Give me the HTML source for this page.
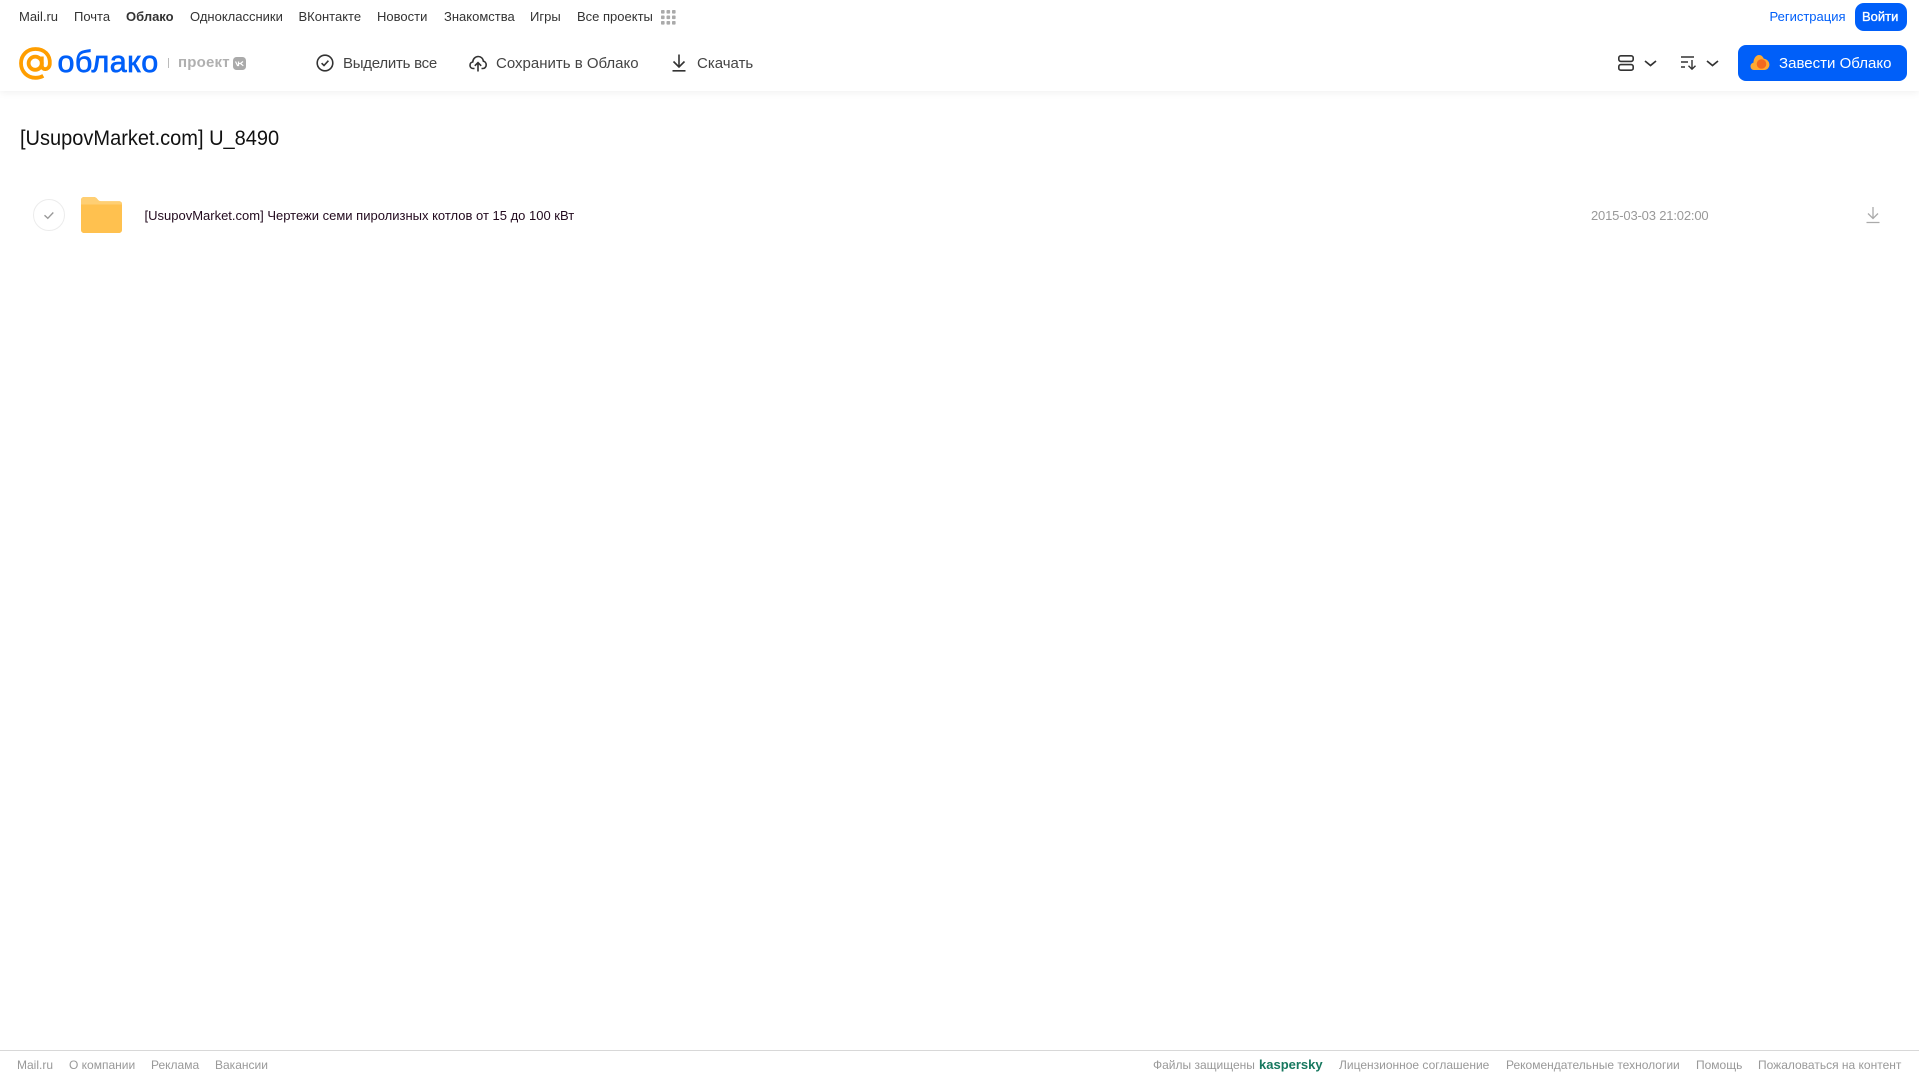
<!DOCTYPE html>
<html lang="ru">
<head>
<meta charset="utf-8">
<title>Облако</title>
<style>
html,body{margin:0;padding:0;width:1919px;height:1079px;overflow:hidden;background:#fff;font-family:"Liberation Sans",Arial,sans-serif}
.t{position:absolute;white-space:nowrap;line-height:20px}
.n{top:7px;font-size:13px;color:#333}
.a{top:54px;font-size:15px;color:#444}
.f{top:1055px;font-size:12px;color:#999}
svg{position:absolute;overflow:visible}
#hs{position:absolute;left:0;top:0;width:1919px;height:91px;background:#fff;box-shadow:0 1px 8px rgba(0,0,0,.07)}
</style>
</head>
<body>
<div id="hs"></div>

<span class="t n" style="left:19px">Mail.ru</span>
<span class="t n" style="left:74px">Почта</span>
<span class="t n" style="left:126px;font-weight:bold;color:#333">Облако</span>
<span class="t n" style="left:190px">Одноклассники</span>
<span class="t n" style="left:298.500px">ВКонтакте</span>
<span class="t n" style="left:377px">Новости</span>
<span class="t n" style="left:444px">Знакомства</span>
<span class="t n" style="left:530px">Игры</span>
<span class="t n" style="left:577px">Все проекты</span>
<svg style="left:661px;top:10px" width="15" height="15" fill="#aaa">
<rect x="0" y="0" width="3.6" height="3.6" rx=".8"/><rect x="5.5" y="0" width="3.6" height="3.6" rx=".8"/><rect x="11" y="0" width="3.6" height="3.6" rx=".8"/>
<rect x="0" y="5.5" width="3.6" height="3.6" rx=".8"/><rect x="5.5" y="5.5" width="3.6" height="3.6" rx=".8"/><rect x="11" y="5.5" width="3.6" height="3.6" rx=".8"/>
<rect x="0" y="11" width="3.6" height="3.6" rx=".8"/><rect x="5.5" y="11" width="3.6" height="3.6" rx=".8"/><rect x="11" y="11" width="3.6" height="3.6" rx=".8"/>
</svg>

<span class="t n" style="left:1769.500px;color:#005ff9">Регистрация</span>
<div style="position:absolute;left:1855px;top:3px;width:52px;height:28px;border-radius:9px;background:#005ff9"></div>
<span class="t n" style="left:1862px;color:#fff;font-size:13px;-webkit-text-stroke:.35px #fff">Войти</span>

<!-- logo -->
<svg style="left:19px;top:47px" width="33" height="33" viewBox="0 0 33 33" fill="none" stroke="#ff9e00" stroke-width="3.8">
<circle cx="16.2" cy="16.2" r="6.6"/>
<path d="M22.800 9.500v9c0 5 7.400 5 8-1.400C31.600 7.700 25 2 16.500 2 8 2 2 8.300 2 16.300c0 8.500 6.500 14.500 14.500 14.500 3 0 5.500-.7 7.800-2"/>
</svg>
<span class="t" style="left:57.500px;top:45px;line-height:34px;font-size:30.500px;color:#005ff9;-webkit-text-stroke:.7px #005ff9;letter-spacing:.45px">облако</span>
<div style="position:absolute;left:168px;top:58px;width:1px;height:10px;background:#bbb"></div>
<span class="t" style="left:178px;top:53px;font-size:15px;color:#b0b0b0;font-weight:bold;letter-spacing:.2px">проект</span>
<div style="position:absolute;left:232.500px;top:57px;width:13px;height:13px;border-radius:3.500px;background:#aaa"></div>
<svg style="left:232.500px;top:57px" width="13" height="13" viewBox="0 0 13 13" fill="none" stroke="#fff" stroke-width="1.200"><path d="M2.500 4.500 4.500 8.500 5.500 8.500V4.500M10 4.500 7.500 6.500 10.300 8.800M5.500 6.500H7.500"/></svg>

<!-- actions -->
<svg style="left:316px;top:54px" width="18" height="18" viewBox="0 0 18 18" fill="none" stroke="#333" stroke-width="1.600"><circle cx="9" cy="9" r="7.800"/><path d="M5.600 9.200 8 11.500 12.400 6.700"/></svg>
<span class="t a" style="left:343px;letter-spacing:-.25px">Выделить все</span>
<svg style="left:469px;top:55px" width="18" height="17" viewBox="0 0 18 17" fill="none" stroke="#333" stroke-width="1.600"><path d="M5.500 13.500H4.300C2.300 13.500 1 12 1 10.200 1 8.500 2.200 7.300 3.700 7 4 3.800 6.300 1.500 9.200 1.500c2.700 0 4.900 2 5.200 4.700 1.600.3 2.800 1.900 2.800 3.700 0 2-1.400 3.600-3.300 3.600H12.500"/><path d="M9 16.500V7.700M5.800 10.800 9 7.600l3.200 3.200"/></svg>
<span class="t a" style="left:496px">Сохранить в Облако</span>
<svg style="left:672px;top:54px" width="14" height="18" viewBox="0 0 14 18" fill="none" stroke="#333" stroke-width="1.600"><path d="M7 .5V12.500M1.500 7.500 7 13l5.500-5.500M.5 16.800H13.500"/></svg>
<span class="t a" style="left:697px">Скачать</span>

<!-- right controls -->
<svg style="left:1618px;top:55px" width="16" height="16" viewBox="0 0 16 16" fill="none" stroke="#333" stroke-width="1.600"><rect x=".8" y=".8" width="14.400" height="5.600" rx="2"/><rect x=".8" y="9.600" width="14.400" height="5.600" rx="2"/></svg>
<svg style="left:1644px;top:60px" width="13" height="7" viewBox="0 0 13 7" fill="none" stroke="#333" stroke-width="1.700"><path d="M1 1 6.500 5.500 12 1"/></svg>
<svg style="left:1681px;top:56px" width="16" height="14" viewBox="0 0 16 14" fill="none" stroke="#333" stroke-width="1.400"><path d="M0 1H13M0 6H7M0 11H4M11 4V13M7.500 9.800 11 13.200l3.500-3.400"/></svg>
<svg style="left:1706px;top:60px" width="13" height="7" viewBox="0 0 13 7" fill="none" stroke="#333" stroke-width="1.700"><path d="M1 1 6.500 5.500 12 1"/></svg>
<div style="position:absolute;left:1738px;top:45px;width:169px;height:36px;border-radius:8px;background:#005ff9"></div>
<svg style="left:1750px;top:54px" width="20" height="17" viewBox="0 0 20 17"><path d="M4 16C1.500 16 .5 14 .5 12.300.5 10.500 1.800 9 3.400 8.800 3.600 4.500 6 1 9 1c2.500 0 4 1.800 4.800 3.800 3 .2 5.600 2.800 5.600 5.800 0 3-2.300 5.400-5.200 5.400z" fill="#ffa930"/><circle cx="11.500" cy="10" r="4.800" fill="#f2691f"/></svg>
<span class="t" style="left:1779px;top:54px;font-size:15px;color:#fff;letter-spacing:.02px">Завести Облако</span>

<!-- content -->
<span class="t" style="left:19.500px;top:126px;line-height:26px;font-size:21px;color:#111;transform:scaleX(.953);transform-origin:0 50%">[UsupovMarket.com] U_8490</span>

<svg style="left:33px;top:199px" width="32" height="32" viewBox="0 0 32 32" fill="none"><circle cx="16" cy="16" r="15.500" stroke="#ececec"/><path d="M11.500 16.200 14.800 19.300 20.300 13.500" stroke="#999" stroke-width="1.400"/></svg>
<svg style="left:81px;top:197px" width="41" height="36" viewBox="0 0 41 36"><path d="M0 3C0 1.300 1.300 0 3 0h9.500c2 0 2.800.8 4 2.200 1 1.200 1.800 2 3.500 2h18c1.700 0 3 1.300 3 3V33c0 1.700-1.300 3-3 3H3c-1.700 0-3-1.300-3-3z" fill="#ffc14f"/><path d="M0 7.500h41V6.500c0-1.300-1.300-2.300-3-2.300H20c-1.700 0-2.500-.8-3.500-2C15.300.8 14.500 0 12.500 0H3C1.300 0 0 1.300 0 3z" fill="#ffcf73"/></svg>
<span class="t" style="left:144.500px;top:206px;font-size:13px;color:#220a1e">[UsupovMarket.com] Чертежи семи пиролизных котлов от 15 до 100 кВт</span>
<span class="t" style="left:1591px;top:206px;font-size:13px;color:#999;letter-spacing:-.17px">2015-03-03 21:02:00</span>
<svg style="left:1866px;top:206px" width="14" height="18" viewBox="0 0 14 18" fill="none" stroke="#aaa" stroke-width="1.300"><path d="M7 1V12M2 7.500 7 12.500 12 7.500M.5 16.500H13.500"/></svg>

<!-- footer -->
<div style="position:absolute;left:0;top:1050px;width:1919px;height:1px;background:#d8d8d8"></div>
<span class="t f" style="left:17px">Mail.ru</span>
<span class="t f" style="left:69px">О компании</span>
<span class="t f" style="left:151px">Реклама</span>
<span class="t f" style="left:215px">Вакансии</span>
<span class="t f" style="left:1153px">Файлы защищены</span>
<span class="t f" style="left:1259px;color:#17785f;font-weight:bold;font-size:13px">kaspersky</span>
<span class="t f" style="left:1339px">Лицензионное соглашение</span>
<span class="t f" style="left:1506px">Рекомендательные технологии</span>
<span class="t f" style="left:1696px">Помощь</span>
<span class="t f" style="left:1758px">Пожаловаться на контент</span>
</body>
</html>
